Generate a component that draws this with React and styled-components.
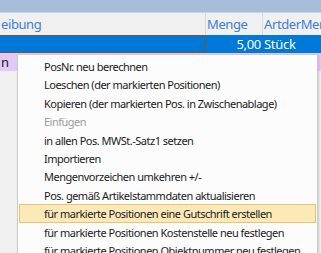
import React from 'react';
import styled, { createGlobalStyle } from 'styled-components';

const GlobalStyle = createGlobalStyle`
	html, body {
		margin: 0;
		padding: 0;
		background: #f0f0f0;
		overflow: hidden;
	}
	body {
		font-family: 'Noto Sans', 'Open Sans', sans-serif;
	}
`;

const items = [
	{ label: 'PosNr. neu berechnen' },
	{ label: 'Loeschen (der markierten Positionen)' },
	{ label: 'Kopieren (der markierten Pos. in Zwischenablage)' },
	{ label: 'Einfügen', disabled: true },
	{ label: 'in allen Pos. MWSt.-Satz1 setzen' },
	{ label: 'Importieren' },
	{ label: 'Mengenvorzeichen umkehren +/-' },
	{ label: 'Pos. gemäß Artikelstammdaten aktualisieren' },
	{ label: 'für markierte Positionen eine Gutschrift erstellen', active: true },
	{ label: 'für markierte Positionen Kostenstelle neu festlegen' },
	{ label: 'für markierte Positionen Objektnummer neu festlegen' },
];

const App = () => {
	return (
		<Screen>
			<GlobalStyle />
			<TitleBand />
			<GridRow $height={22} $bg="#f0f0f0">
				<HeaderCell>eibung</HeaderCell>
				<HeaderCell>Menge</HeaderCell>
				<HeaderCell $last>ArtderMenge</HeaderCell>
			</GridRow>
			<GridRow $height={18} $bg="#0078d7">
				<FocusCell />
				<DataCell $right>5,00</DataCell>
				<DataCell>Stück</DataCell>
			</GridRow>
			<GridRow $height={18} $bg="#e4c9f7">
				<DataCell $dark>n</DataCell>
				<DataCell />
				<DataCell />
			</GridRow>
			<ContextMenu>
				{items.map(item => (
					<MenuItem key={item.label} $disabled={item.disabled} $active={item.active}>
						{item.label}
					</MenuItem>
				))}
			</ContextMenu>
		</Screen>
	);
};

export default App;

const Screen = styled.div`
	position: relative;
	width: 321px;
	height: 253px;
	overflow: hidden;
	background: #f0f0f0;
`;

const TitleBand = styled.div`
	height: 12px;
	background: #a8bdd9;
	border-bottom: 1px solid #c9d3e0;
`;

const GridRow = styled.div`
	display: grid;
	grid-template-columns: 206px 57px 1fr;
	height: ${p => p.$height}px;
	background: ${p => p.$bg};
	white-space: nowrap;
	overflow: hidden;
`;

const HeaderCell = styled.div`
	display: flex;
	align-items: center;
	padding-left: 1px;
	font-size: 13px;
	letter-spacing: -0.4px;
	color: #3b7fd6;
	border-right: ${p => (p.$last ? 'none' : '1px solid #dadada')};
	overflow: hidden;
`;

const FocusCell = styled.div`
	border: 1px solid #7d5230;
	border-left: none;
	margin-right: 1px;
`;

const DataCell = styled.div`
	display: flex;
	align-items: center;
	justify-content: ${p => (p.$right ? 'flex-end' : 'flex-start')};
	padding: 0 2px 0 1px;
	font-size: 13px;
	letter-spacing: -0.3px;
	color: ${p => (p.$dark ? '#1a1a1a' : '#ffffff')};
	overflow: hidden;
`;

const ContextMenu = styled.div`
	position: absolute;
	left: 17px;
	top: 54px;
	width: 299px;
	padding-top: 2px;
	background: #fcfcfc;
	border: 1px solid #cccccc;
	box-shadow: 1px 1px 2px rgba(0, 0, 0, 0.15);
`;

const MenuItem = styled.div`
	height: 18.4px;
	line-height: 17px;
	margin: 0 1px;
	padding-left: 24px;
	box-sizing: border-box;
	font-size: 11px;
	letter-spacing: -0.5px;
	white-space: nowrap;
	color: ${p => (p.$disabled ? '#9b9b9b' : '#1b1b1b')};
	background: ${p => (p.$active ? '#fde9b8' : 'transparent')};
	border: 1px solid ${p => (p.$active ? '#e7c474' : 'transparent')};
`;
